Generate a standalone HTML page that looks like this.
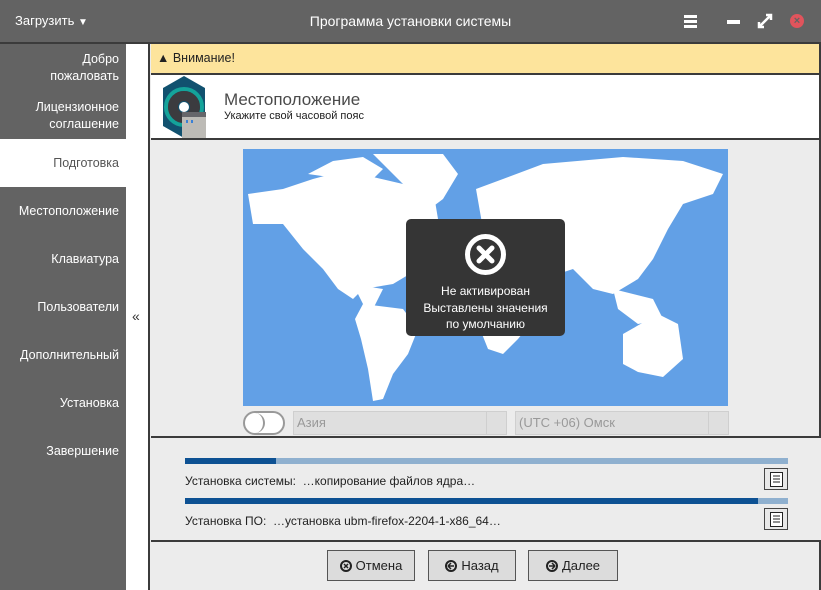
<!DOCTYPE html>
<html><head><meta charset="utf-8"><style>
*{margin:0;padding:0;box-sizing:border-box}
body{width:821px;height:590px;overflow:hidden;background:#ececec;font-family:"Liberation Sans","DejaVu Sans",sans-serif;position:relative;font-size:12px;color:#333}
.abs{position:absolute}
#title{left:0;top:0;width:821px;height:44px;background:#636363;border-bottom:2px solid #3b3b3b;color:#fff}
#side{left:0;top:44px;width:126px;height:546px;background:#636363}
.si{position:absolute;right:7px;text-align:right;color:#fff;font-size:12.5px;line-height:17px}
#col{left:126px;top:44px;width:24px;height:546px;background:#fff;border-right:2px solid #3b3b3b}
#warn{left:151px;top:44px;width:670px;height:31px;background:#fde49c;border-bottom:2px solid #3b3b3b}
#hdr{left:151px;top:75px;width:670px;height:65px;background:#fff;border-bottom:2px solid #3b3b3b}
.rb{border-right:2px solid #3b3b3b}
.combo{background:#dfdfdf;border:1px solid #cfcfcf;height:24px;color:#999;font-size:13px;line-height:22px;padding-left:3px}
.btn{background:#dcdcdc;border:1px solid #555;height:31px;top:550px;font-size:13px;line-height:29px;text-align:center;color:#222}
.btn svg{vertical-align:-2px;margin-right:4px}
.lb{background:#e8e8e8;border:1px solid #444;width:24px;height:22px}
</style></head><body>
<div id="title" class="abs">
 <div class="abs" style="left:15px;top:13px;font-size:13px">Загрузить <span style="font-size:10px">▼</span></div>
 <div class="abs" style="left:0;width:821px;top:13px;text-align:center;font-size:14px">Программа установки системы</div>
 <div class="abs" style="left:684px;top:15px;width:13px;height:3px;background:#fff;box-shadow:0 5px 0 #fff,0 10px 0 #fff"></div>
 <div class="abs" style="left:727px;top:20px;width:13px;height:4px;background:#fff"></div>
 <svg class="abs" style="left:757px;top:13px" width="16" height="16"><path d="M2 14L14 2M9 2h5v5M2 9v5h5" stroke="#fff" stroke-width="2.5" fill="none"/></svg>
 <div class="abs" style="left:790px;top:14px;width:14px;height:14px;border-radius:50%;background:#e0545c;color:#636363;font-size:11px;line-height:14px;text-align:center;font-weight:bold">×</div>
</div>
<div id="side" class="abs">
 <div class="si" style="top:7px">Добро<br>пожаловать</div>
 <div class="si" style="top:55px">Лицензионное<br>соглашение</div>
 <div class="abs" style="left:0;top:95px;width:126px;height:48px;background:#fff"></div>
 <div class="si" style="top:111px;color:#555">Подготовка</div>
 <div class="si" style="top:159px">Местоположение</div>
 <div class="si" style="top:207px">Клавиатура</div>
 <div class="si" style="top:255px">Пользователи</div>
 <div class="si" style="top:303px">Дополнительный</div>
 <div class="si" style="top:351px">Установка</div>
 <div class="si" style="top:399px">Завершение</div>
</div>
<div id="col" class="abs"><div class="abs" style="left:6px;top:264px;font-size:14px;color:#333">«</div></div>
<div id="warn" class="abs rb"><div class="abs" style="left:6px;top:7px;font-size:12.5px;color:#222">▲ Внимание!</div></div>
<div id="hdr" class="abs rb">
 <svg class="abs" style="left:11px;top:1px" width="60" height="63">
  <polygon points="22,0 43,12 43,50 22,62 1,50 1,12" fill="#11516f"/>
  <circle cx="22" cy="31" r="18" fill="none" stroke="#14a39a" stroke-width="4"/>
  <circle cx="22" cy="31" r="11" fill="none" stroke="#3b3b3f" stroke-width="10"/>
  <circle cx="22" cy="31" r="5" fill="#fff"/>
  <rect x="20" y="36" width="24" height="26" fill="#bdbbb6"/>
  <rect x="20" y="36" width="24" height="5" fill="#66666a"/>
  <rect x="24" y="44" width="2" height="3" fill="#3a80d6"/><rect x="29" y="44" width="2" height="3" fill="#3a80d6"/>
 </svg>
 <div class="abs" style="left:73px;top:15px;font-size:17px;color:#4a4a4a">Местоположение</div>
 <div class="abs" style="left:73px;top:35px;font-size:11px;color:#222">Укажите свой часовой пояс</div>
</div>
<div class="abs" style="left:151px;top:140px;width:670px;height:298px;border-right:2px solid #3b3b3b;border-bottom:2px solid #3b3b3b"></div>
<svg class="abs" style="left:243px;top:149px" width="485" height="257">
 <rect width="485" height="257" fill="#62a0e6"/>
 <g fill="#fff">
  <polygon points="5,45 40,40 70,30 100,22 130,28 160,35 185,60 200,85 215,95 200,110 175,120 150,135 120,140 110,150 95,140 80,120 60,100 40,75 10,75"/>
  <polygon points="65,25 90,12 120,8 140,20 130,30 100,30"/>
  <polygon points="130,5 200,5 215,25 200,50 180,65 170,60 160,35"/>
  <polygon points="110,135 140,140 130,160 120,155"/>
  <polygon points="120,155 160,160 175,180 165,205 150,225 140,250 130,252 125,220 118,190 112,170"/>
  <polygon points="233,40 260,30 300,15 380,8 440,12 480,25 470,45 440,55 425,80 410,110 395,130 370,145 350,140 330,120 300,130 280,105 255,95 240,80"/>
  <polygon points="233,95 290,95 300,125 295,165 275,190 260,205 245,200 235,175"/>
  <polygon points="370,140 410,150 420,170 395,175 375,160"/>
  <polygon points="380,185 415,165 435,175 440,210 420,228 395,223 380,215"/>
  <polygon points="155,45 190,40 195,70 175,75"/>
  <polygon points="325,25 350,20 345,30"/>
 </g>
</svg>
<div class="abs" style="left:406px;top:219px;width:159px;height:117px;background:#353535;border-radius:5px;color:#fff;text-align:center">
 <div style="margin:15px auto 0;width:41px;height:41px;border:5px solid #fff;border-radius:50%;position:relative"><svg class="abs" style="left:6px;top:6px" width="19" height="19"><path d="M3 3L16 16M16 3L3 16" stroke="#fff" stroke-width="5" stroke-linecap="round"/></svg></div>
 <div style="margin-top:8px;font-size:12px;line-height:16.5px">Не активирован<br>Выставлены значения<br>по умолчанию</div>
</div>
<div class="abs" style="left:243px;top:411px;width:42px;height:24px;border:2px solid #999;border-radius:12px;background:#fff"><div style="width:20px;height:20px;border-right:2px solid #999;border-radius:10px"></div></div>
<div class="abs combo" style="left:293px;top:411px;width:214px">Азия<div class="abs" style="right:0;top:0;width:20px;height:22px;border-left:1px solid #cfcfcf"></div></div>
<div class="abs combo" style="left:515px;top:411px;width:214px">(UTC +06) Омск<div class="abs" style="right:0;top:0;width:20px;height:22px;border-left:1px solid #cfcfcf"></div></div>
<div class="abs" style="left:185px;top:458px;width:603px;height:6px;background:#8fb0cf"><div style="width:91px;height:6px;background:#0d5193"></div></div>
<div class="abs" style="left:185px;top:474px;font-size:12px;color:#222">Установка системы: &nbsp;…копирование файлов ядра…</div>
<div class="abs lb" style="left:764px;top:468px"><svg class="abs" style="left:5px;top:3px" width="13" height="15"><rect x="0.5" y="0.5" width="12" height="14" fill="#fff" stroke="#222"/><path d="M3 4h7M3 7h7M3 10h7" stroke="#222"/></svg></div>
<div class="abs" style="left:185px;top:498px;width:603px;height:6px;background:#8fb0cf"><div style="width:573px;height:6px;background:#0d5193"></div></div>
<div class="abs" style="left:185px;top:514px;font-size:12px;color:#222">Установка ПО: &nbsp;…установка ubm-firefox-2204-1-x86_64…</div>
<div class="abs lb" style="left:764px;top:508px"><svg class="abs" style="left:5px;top:3px" width="13" height="15"><rect x="0.5" y="0.5" width="12" height="14" fill="#fff" stroke="#222"/><path d="M3 4h7M3 7h7M3 10h7" stroke="#222"/></svg></div>
<div class="abs" style="left:151px;top:540px;width:670px;height:2px;background:#3b3b3b"></div>
<div class="abs" style="left:819px;top:540px;width:2px;height:50px;background:#3b3b3b"></div>
<div class="abs btn" style="left:327px;width:88px"><svg width="12" height="12"><circle cx="6" cy="6" r="5" fill="none" stroke="#222" stroke-width="2"/><path d="M4 4l4 4M8 4l-4 4" stroke="#222" stroke-width="1.5"/></svg>Отмена</div>
<div class="abs btn" style="left:428px;width:88px"><svg width="12" height="12"><circle cx="6" cy="6" r="5" fill="none" stroke="#222" stroke-width="2"/><path d="M3 6h6M3 6l3-3M3 6l3 3" stroke="#222" stroke-width="1.5" fill="none"/></svg>Назад</div>
<div class="abs btn" style="left:528px;width:90px"><svg width="12" height="12"><circle cx="6" cy="6" r="5" fill="none" stroke="#222" stroke-width="2"/><path d="M3 6h6M9 6l-3-3M9 6l-3 3" stroke="#222" stroke-width="1.5" fill="none"/></svg>Далее</div>
</body></html>
